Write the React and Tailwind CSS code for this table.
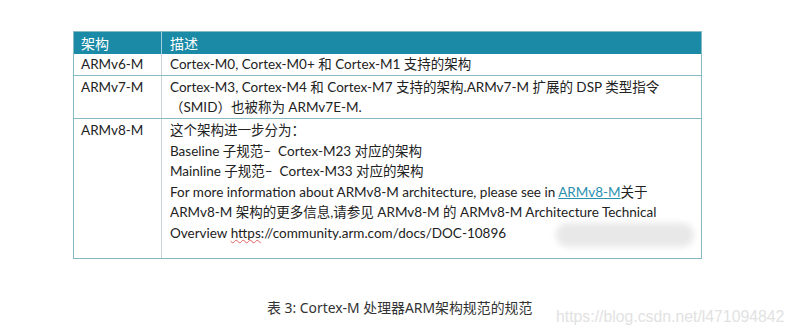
import React from "react";

const font = { fontFamily: "Lato, 'Noto Sans CJK SC', sans-serif" };

export default function App() {
  return (
    <div className="w-[793px] h-[332px] bg-white relative overflow-hidden" style={font}>
      <div className="pt-[31px] pl-[73px]">
        <div className="w-[629px] border border-[#86b9c3] text-[13.5px] text-[#222]">
          {/* header */}
          <div className="flex h-[22px] bg-[#1a8aa6] text-white text-[14px]">
            <div className="w-[88px] pl-[7px] flex items-center border-r border-[#9fd0db]">架构</div>
            <div className="flex-1 pl-[8px] flex items-center">描述</div>
          </div>
          {/* row 1 */}
          <div className="flex h-[22px] border-b border-[#86b9c3]">
            <div className="w-[88px] pl-[7px] flex items-center border-r border-[#c9d3d6]">ARMv6-M</div>
            <div className="flex-1 pl-[8px] flex items-center">Cortex-M0, Cortex-M0+ 和 Cortex-M1 支持的架构</div>
          </div>
          {/* row 2 */}
          <div className="flex h-[43px] border-b border-[#86b9c3] leading-[20px]">
            <div className="w-[88px] pl-[7px] pt-[1px] border-r border-[#c9d3d6]">ARMv7-M</div>
            <div className="flex-1 pl-[8px] pt-[1px]">
              <div>Cortex-M3, Cortex-M4 和 Cortex-M7 支持的架构.ARMv7-M 扩展的 DSP 类型指令</div>
              <div>（SMID）也被称为 ARMv7E-M.</div>
            </div>
          </div>
          {/* row 3 */}
          <div className="flex h-[139px] leading-[20.6px]">
            <div className="w-[88px] pl-[7px] pt-[1px] border-r border-[#c9d3d6]">ARMv8-M</div>
            <div className="flex-1 pl-[8px] pt-[1px] relative">
              <div>这个架构进一步分为：</div>
              <div>Baseline 子规范–&nbsp; Cortex-M23 对应的架构</div>
              <div>Mainline 子规范–&nbsp; Cortex-M33 对应的架构</div>
              <div>
                For more information about ARMv8-M architecture, please see in{" "}
                <span className="text-[#2a8fb0] underline">ARMv8-M</span>关于
              </div>
              <div>ARMv8-M 架构的更多信息,请参见 ARMv8-M 的 ARMv8-M Architecture Technical</div>
              <div>
                Overview{" "}
                <span className="underline decoration-wavy decoration-[#e06060] decoration-1 [text-decoration-skip-ink:none]">https</span>
                ://community.arm.com/docs/DOC-10896
              </div>
              <div className="absolute left-[394px] top-[104px] w-[138px] h-[24px] rounded-full bg-[#e8e8e8] blur-[3px]" />
            </div>
          </div>
        </div>
      </div>
      <div className="absolute left-[267px] top-[298px] text-[13.9px] text-[#333]" style={{ fontFamily: "'Noto Sans', 'Noto Sans CJK SC', sans-serif" }}>
        表 3: Cortex-M 处理器ARM架构规范的规范
      </div>
      <div className="absolute left-[556px] top-[305px] text-[15.8px] text-[#e2e2e2]" style={{ fontFamily: "'Liberation Sans', Arial, sans-serif" }}>
        https://blog.csdn.net/l471094842
      </div>
    </div>
  );
}
